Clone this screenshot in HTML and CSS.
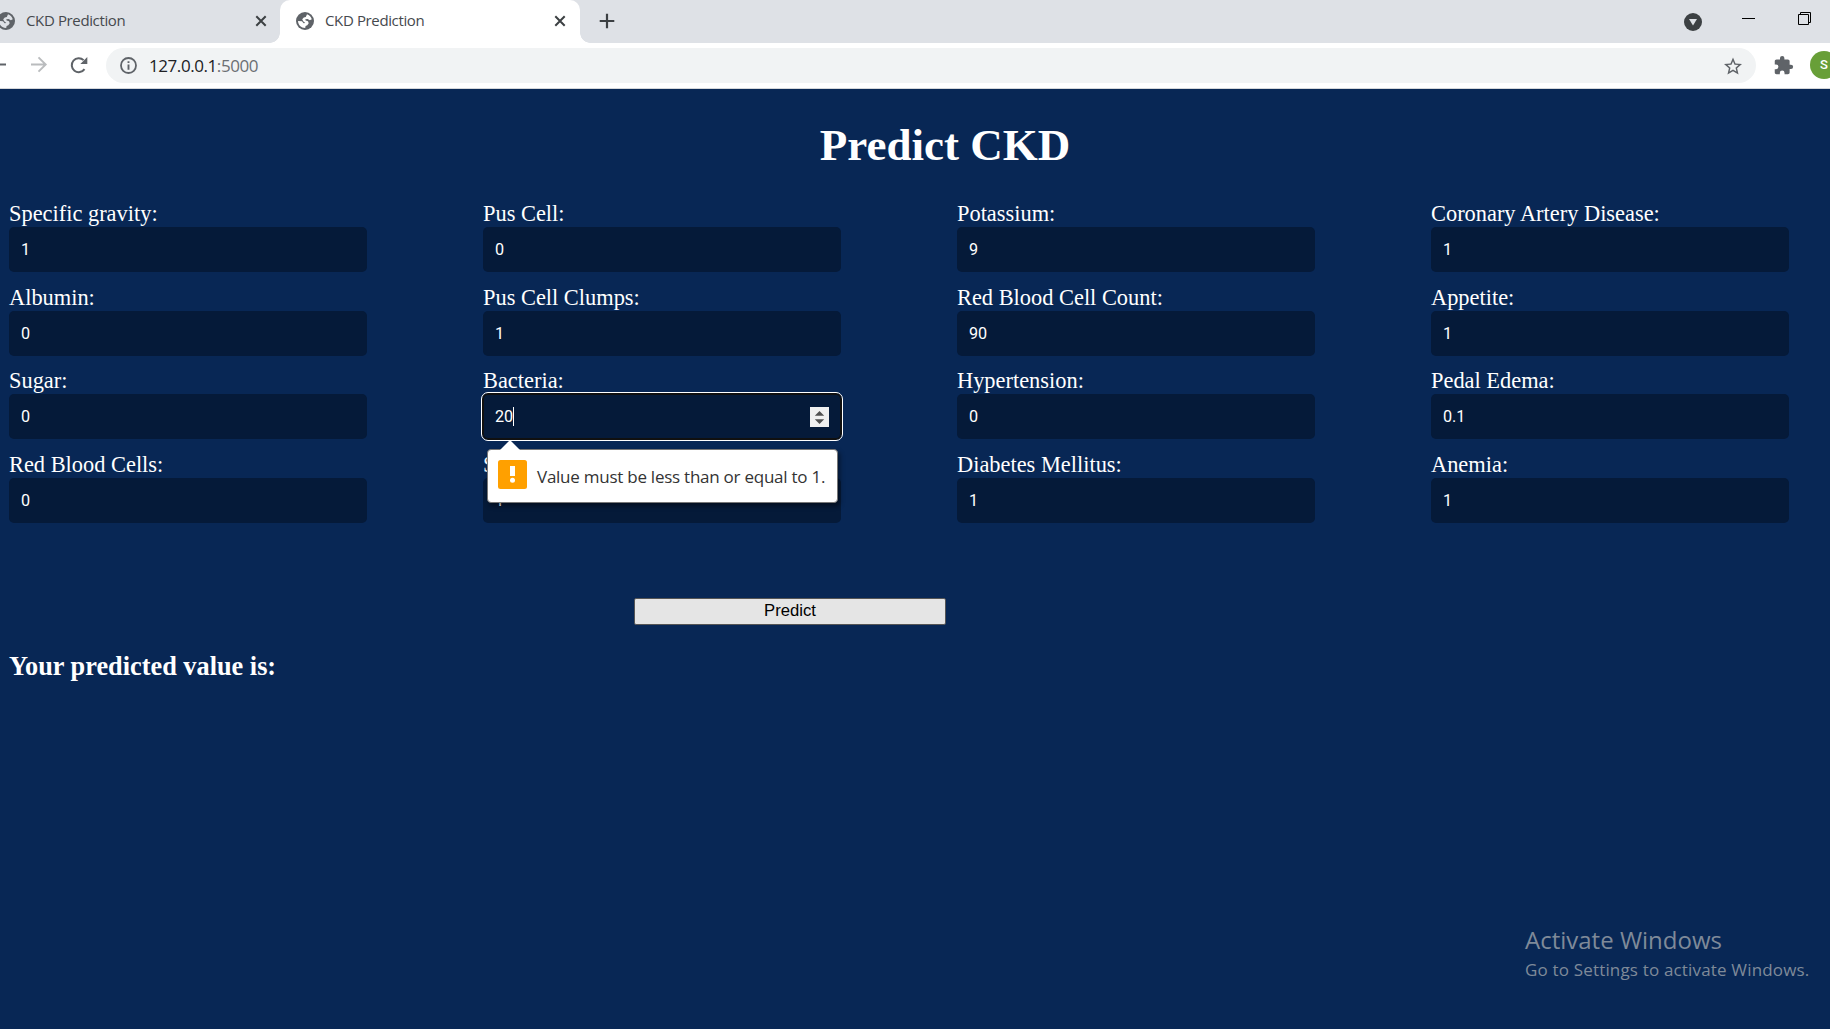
FILE: index.html
```html
<!DOCTYPE html>
<html lang="en">
<head>
<meta charset="utf-8">
<title>CKD Prediction</title>
<link rel="stylesheet" href="styles.css">
</head>
<body>
<svg class="defs" width="0" height="0">
  <symbol id="globe" viewBox="0 0 18 18"><circle cx="9" cy="9" r="9" fill="#5f6368"/><path d="M11 2.300C13.200 3 15 4.800 15.800 7.200L13.800 8.300 11.600 6.900 9.300 7.300 9.600 8.400 12 9.200 12.700 11.200 11.300 13.300 9.600 14 9.200 16C5 16 2.200 13 2 9L6 9.300 7.600 11.300 9.300 11 7.200 9.200 6.200 7.200 7.800 5.500 9.800 5Z" fill="currentColor"/></symbol>
  <symbol id="close" viewBox="0 0 12 12"><path d="M1.300 1.300 10.700 10.700M10.700 1.300 1.300 10.700" stroke="#3c4043" stroke-width="2" fill="none"/></symbol>
</svg>
<header class="browser">
  <div class="tabs">
    <div class="tab tab-back">
      <svg class="globe"><use href="#globe"/></svg><span class="tab-title">CKD Prediction</span><svg class="close"><use href="#close"/></svg>
    </div>
    <div class="tab tab-active">
      <svg class="globe"><use href="#globe"/></svg><span class="tab-title">CKD Prediction</span><svg class="close"><use href="#close"/></svg>
    </div>
    <svg class="plus" width="16" height="16" viewBox="0 0 16 16"><path d="M8 .7V15.300M.7 8H15.300" stroke="#3c4043" stroke-width="2.200"/></svg>
    <div class="window-controls">
      <svg width="18" height="18" viewBox="0 0 18 18"><circle cx="9" cy="9" r="9" fill="#3c4043"/><path d="M5 6H13L9 12.500Z" fill="#dee1e6"/></svg>
      <svg class="minimize" width="13" height="2"><path d="M0 .5H13" stroke="#000"/></svg>
      <svg class="restore" width="13" height="13" viewBox="0 0 13 13"><path d="M.5 2.500H10.500V12.500H.5ZM2.500 2.500V.5H12.500V10.500H10.500" fill="none" stroke="#000"/></svg>
    </div>
  </div>
  <div class="toolbar">
    <svg class="nav" width="106" height="45" viewBox="0 0 106 45"><path d="M0 21.500H6" stroke="#5f6368" stroke-width="2"/><path d="M31 21.500H45M38.500 14.300 45.700 21.500 38.500 28.700" fill="none" stroke="#babcbe" stroke-width="1.900"/><path d="M84.500 26.200A7 7 0 1 1 83.600 17.100" fill="none" stroke="#5f6368" stroke-width="2"/><path d="M87.300 14V21H80.300Z" fill="#5f6368"/></svg>
    <div class="address">
      <svg width="17" height="17" viewBox="0 0 17 17"><circle cx="8.500" cy="8.500" r="7.500" fill="none" stroke="#5f6368" stroke-width="1.800"/><path d="M8.500 4.200V6.100M8.500 7.500V12.700" stroke="#5f6368" stroke-width="1.900"/></svg>
      <span class="url">127.0.0.1<span class="port">:5000</span></span>
      <svg class="star" width="18" height="18" viewBox="2 1.500 20 20"><path d="M22 9.240l-7.190-.62L12 2 9.190 8.630 2 9.240l5.460 4.730L5.820 21 12 17.270 18.180 21l-1.630-7.030L22 9.240zM12 15.400l-3.760 2.270 1-4.280-3.320-2.880 4.380-.38L12 6.100l1.710 4.040 4.380.38-3.320 2.880 1 4.280L12 15.400z" fill="#5f6368"/></svg>
    </div>
    <svg class="puzzle" width="21" height="21" viewBox="0 0 24 24"><path d="M20.500 11H19V7c0-1.100-.9-2-2-2h-4V3.500a2.500 2.500 0 0 0-5 0V5H4c-1.100 0-1.990.9-1.990 2v3.800H3.500a2.700 2.700 0 0 1 0 5.400H2V20c0 1.100.9 2 2 2h3.800v-1.500a2.700 2.700 0 0 1 5.400 0V22H17c1.100 0 2-.9 2-2v-4h1.500a2.500 2.500 0 0 0 0-5z" fill="#5f6368"/></svg>
    <div class="avatar">S</div>
  </div>
</header>
<main>
  <h1>Predict CKD</h1>
  <form class="fields">
    <label>Specific gravity:<input value="1"></label>
    <label>Albumin:<input value="0"></label>
    <label>Sugar:<input value="0"></label>
    <label>Red Blood Cells:<input value="0"></label>
    <label>Pus Cell:<input value="0"></label>
    <label>Pus Cell Clumps:<input value="1"></label>
    <div class="invalid">Bacteria:
      <div class="focused"><span>20</span><i class="caret"></i>
        <svg class="spin" width="19" height="20" viewBox="0 0 19 20"><path d="M0 0H19V20H0Z" fill="#f0f0f0"/><path d="M4.800 8.700 9.500 4 14.200 8.700ZM4.800 12.300H14.200L9.500 17Z" fill="#505050"/></svg>
      </div>
      <div class="bubble">
        <svg class="warn" width="29" height="29" viewBox="0 0 29 29"><rect width="29" height="29" rx="2.500" fill="#ffa000"/><path d="M12 6H17V16H12Z" fill="#fff"/><circle cx="14.500" cy="20.200" r="2.500" fill="#fff"/></svg>
        <span>Value must be less than or equal to 1.</span>
      </div>
    </div>
    <label>S<input value="1"></label>
    <label>Potassium:<input value="9"></label>
    <label>Red Blood Cell Count:<input value="90"></label>
    <label>Hypertension:<input value="0"></label>
    <label>Diabetes Mellitus:<input value="1"></label>
    <label>Coronary Artery Disease:<input value="1"></label>
    <label>Appetite:<input value="1"></label>
    <label>Pedal Edema:<input value="0.1"></label>
    <label>Anemia:<input value="1"></label>
  </form>
  <button class="predict">Predict</button>
  <h3>Your predicted value is:</h3>
</main>
<aside class="watermark"><p class="wm-title">Activate Windows</p><p class="wm-text">Go to Settings to activate Windows.</p></aside>
</body>
</html>
```
FILE: styles.css
```css
* { box-sizing: border-box; }
body {
  margin: 0;
  width: 1830px;
  height: 1029px;
  overflow: hidden;
  background: #082755;
  color: #fff;
  font: 22.4px/26px "Liberation Serif", serif;
}
svg { display: block; flex: none; }
.defs { position: absolute; }
.browser {
  height: 89px;
  overflow: hidden;
  background: #fff;
  border-bottom: 1px solid #d5d7da;
  font-family: "Open Sans", sans-serif;
}
.tabs { display: flex; height: 43px; background: #dee1e6; }
.tab { display: flex; align-items: center; height: 43px; padding-bottom: 1px; color: #45494d; }
.tab-back { width: 280px; padding-right: 13px; }
.tab-back .globe { margin-left: -3px; color: #dee1e6; }
.tab-active { position: relative; width: 300px; padding: 0 14px 1px 16px; background: #fff; border-radius: 10px 10px 0 0; }
.tab-active .globe { color: #fff; }
.tab-active::before, .tab-active::after {
  content: "";
  position: absolute;
  bottom: 0;
  width: 10px;
  height: 10px;
}
.tab-active::before { left: -10px; background: radial-gradient(circle at 0 0, transparent 9.5px, #fff 10px); }
.tab-active::after { right: -10px; background: radial-gradient(circle at 100% 0, transparent 9.5px, #fff 10px); }
.globe { width: 18px; height: 18px; }
.close { width: 12px; height: 12px; margin-left: auto; }
.tab-title { margin-left: 11px; padding-bottom: 2px; font-size: 15px; letter-spacing: -.37px; }
.plus { margin: 13px 0 0 19px; }
.window-controls { display: flex; margin-left: auto; padding: 13px 19px 0 0; }
.minimize { margin: 5px 0 0 40px; }
.restore { margin: -1px 0 0 43px; }
.toolbar { display: flex; height: 45px; }
.address {
  display: flex;
  flex: none;
  align-items: center;
  width: 1650px;
  height: 35px;
  margin-top: 5px;
  padding: 0 14px;
  border-radius: 18px;
  background: #f1f3f4;
}
.url { margin-left: 12px; color: #202124; font-size: 17px; letter-spacing: -.43px; }
.port { color: #6b6f73; }
.star { margin-left: auto; }
.puzzle { margin: 12px 0 0 17px; }
.avatar {
  flex: none;
  width: 28px;
  height: 28px;
  margin: 8px 0 0 16px;
  border-radius: 50%;
  background: #689f38;
  color: #fff;
  font: 500 13px/28px Roboto, sans-serif;
  text-align: center;
}
main { padding: 0 9px; }
h1 { margin: 30px 0 0 50px; width: 1772px; text-align: center; font-size: 45px; line-height: 52px; }
.fields {
  display: grid;
  grid-auto-flow: column;
  grid-template: repeat(4, 83.67px) / repeat(4, 474px);
  margin-top: 30px;
}
.fields label, .invalid { display: block; }
.invalid { position: relative; }
input, .focused {
  display: block;
  width: 358px;
  height: 45px;
  margin: 0;
  padding: 0 12px;
  border: 0;
  border-radius: 5px;
  background: #051a39;
  color: #fff;
  font: 16.2px Roboto, sans-serif;
}
.focused { display: flex; align-items: center; outline: 1px solid #fff; outline-offset: 1px; box-shadow: 0 0 0 1px #101010, inset 0 0 0 1px #101010; }
.caret { width: 1px; height: 19px; background: #fff; }
.spin { margin-left: auto; margin-top: 1px; }
.bubble {
  position: absolute;
  z-index: 2;
  left: 4px;
  top: 81px;
  display: flex;
  align-items: center;
  width: 351px;
  height: 54px;
  padding: 0 10px;
  border: 1px solid #777;
  border-radius: 4px;
  background: #fff;
  box-shadow: 2px 3px 5px rgba(0, 0, 0, .45);
  color: #333;
  font: 17px "Open Sans", sans-serif;
  letter-spacing: -.25px;
  white-space: nowrap;
}
.bubble::before {
  content: "";
  position: absolute;
  left: 12px;
  top: -10px;
  border: solid transparent;
  border-width: 0 10px 10px;
  border-bottom-color: #fff;
}
.warn { margin: -4px 10px 0 0; }
.predict {
  display: block;
  width: 312px;
  height: 27px;
  margin: 62px 0 0 625px;
  padding: 0;
  border: 1px solid #555;
  border-radius: 2px;
  background: #e5e5e5;
  color: #000;
  font: 16.67px "Liberation Sans", sans-serif;
}
h3 { margin: 27px 0 0; font-size: 26.3px; line-height: 30px; }
.watermark {
  position: absolute;
  left: 1525px;
  top: 924px;
  color: #7f8a99;
  font-family: "Open Sans", sans-serif;
  white-space: nowrap;
}
.watermark p { margin: 0; }
.wm-title { font-size: 24px; line-height: 32px; }
.wm-text { font-size: 17px; line-height: 28px; letter-spacing: .17px; }
```
